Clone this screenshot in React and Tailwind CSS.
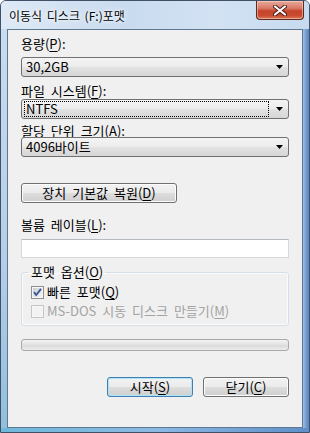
import React from 'react';

const FONT = "font-['Noto_Sans_CJK_KR','Noto_Sans',sans-serif]";

function Key({ children }) {
  return <span className="underline underline-offset-[2px]">{children}</span>;
}

function Arrow() {
  return (
    <svg width="7" height="4" viewBox="0 0 7 4" className="shrink-0">
      <path d="M0 0H7L3.5 4Z" fill="#000" />
    </svg>
  );
}

function Combo({ value, focused, className }) {
  return (
    <div
      className={`${className} h-[20px] flex items-center rounded-[3px] border border-[#707070] bg-[linear-gradient(#f4f4f4_0%,#ececec_48%,#e2e2e2_52%,#d6d6d6_100%)] pl-[2px] pr-[5px]`}
    >
      <div
        className={
          focused
            ? 'flex-1 h-[16px] flex items-center pl-[1px] border border-dotted border-black'
            : 'flex-1 h-[16px] flex items-center pl-[2px]'
        }
      >
        {value}
      </div>
      <div className="w-[14px] flex justify-end">
        <Arrow />
      </div>
    </div>
  );
}

function Button({ children, primary, className }) {
  return (
    <div
      className={`${className} h-[20px] flex items-center justify-center rounded-[3px] border bg-[linear-gradient(#f2f2f2_0%,#ebebeb_48%,#dddddd_52%,#cfcfcf_100%)] ${
        primary ? 'border-[#3c7fb1] shadow-[inset_0_0_0_1px_#aee3f8]' : 'border-[#707070] shadow-[inset_0_0_0_1px_#fcfcfc]'
      }`}
    >
      {children}
    </div>
  );
}

function Check({ checked, disabled }) {
  return (
    <svg width="13" height="13" viewBox="0 0 13 13" className="shrink-0">
      <defs>
        <linearGradient id="cbIn" x1="0" y1="0" x2="1" y2="1">
          <stop offset="0" stopColor="#cbcfd6" />
          <stop offset="1" stopColor="#f4f5f7" />
        </linearGradient>
      </defs>
      <rect x="0.5" y="0.5" width="12" height="12" fill="#f6f6f6" stroke={disabled ? '#c6c6c6' : '#8e8f8f'} />
      <rect x="2" y="2" width="9" height="9" fill={disabled ? '#f2f2f2' : 'url(#cbIn)'} />
      {checked && (
        <path d="M3 6.2 L5.2 9 L10 2.8" stroke="#3d5a95" strokeWidth="1.9" fill="none" />
      )}
    </svg>
  );
}

export default function App() {
  return (
    <div
      className={`${FONT} w-[310px] h-[433px] flex flex-col rounded-t-[6px] border border-[#3f5067] bg-[linear-gradient(180deg,#d6e5f5_0%,#c6daf0_20%,#b6cfea_70%,#9ec2e6_100%)] overflow-hidden text-[13px] leading-[14px] [word-spacing:3px] text-black`}
    >
      <div className="h-[28px] flex items-start justify-between shrink-0 bg-[linear-gradient(90deg,#dde9f6_0%,#c9dbef_40%,#d2e2f3_70%,#c7daef_100%)]">
        <div className="pl-[8px] pt-[8px] [text-shadow:0_0_6px_#fff,0_0_3px_#fff] text-[12px] leading-[14px] [word-spacing:2px]">
          이동식 디스크 (F:)포맷
        </div>
        <div className="mr-[5px] w-[48px] h-[19px] flex items-center justify-center rounded-b-[4px] border border-t-0 border-[#5c2a22] bg-[linear-gradient(#e9a99c_0%,#d77a67_40%,#c7442c_55%,#c94a2f_80%,#db7a55_100%)] shadow-[inset_0_0_0_1px_rgba(255,220,210,0.5)]">
          <svg width="14" height="11" viewBox="0 0 14 11">
            <path d="M2 1.5 L12 9.5 M12 1.5 L2 9.5" stroke="#4a1c14" strokeWidth="4" strokeLinecap="round" />
            <path d="M2 1.5 L12 9.5 M12 1.5 L2 9.5" stroke="#fff" strokeWidth="2.2" strokeLinecap="round" />
          </svg>
        </div>
      </div>

      <div className="flex flex-1">
        <div className="w-[6px] bg-[linear-gradient(180deg,#c9dcf0_0%,#b4cde8_60%,#8fc0dc_100%)]" />
        <div className="flex-1 flex flex-col border border-[#5f7790] bg-[#f0f0f0] pl-[13px] pr-[13px] pt-[8px]">
          <div className="leading-[12px]">
            용량(<Key>P</Key>):
          </div>
          <Combo className="mt-[7px]" value="30,2GB" />

          <div className="mt-[8px] leading-[12px]">
            파일 시스템(<Key>F</Key>):
          </div>
          <Combo className="mt-[2px]" value="NTFS" focused />

          <div className="mt-[6px] leading-[12px]">
            할당 단위 크기(<Key>A</Key>):
          </div>
          <Combo className="mt-0" value="4096바이트" />

          <Button className="mt-[26px] w-[156px]">
            <span>
              장치 기본값 복원(<Key>D</Key>)
            </span>
          </Button>

          <div className="mt-[16px] leading-[12px]">
            볼륨 레이블(<Key>L</Key>):
          </div>
          <div className="mt-[8px] h-[19px] border border-[#d4d9de] border-t-[#b5bac0] bg-white" />

          <fieldset className="mt-[7px] h-[61px] rounded-[3px] border border-[#d5dfe5] shadow-[inset_0_0_0_1px_#fbfbfb] px-[9px]">
            <legend className="ml-[-2px] px-[2px] leading-[14px]">
              포맷 옵션(<Key>O</Key>)
            </legend>
            <div className="mt-[6px] flex items-center gap-[3px] h-[14px]">
              <Check checked />
              <span>
                빠른 포맷(<Key>Q</Key>)
              </span>
            </div>
            <div className="mt-[5px] flex items-center gap-[3px] h-[14px] text-[#a3a3a3]">
              <Check disabled />
              <span>
                MS-DOS 시동 디스크 만들기(<Key>M</Key>)
              </span>
            </div>
          </fieldset>

          <div className="mt-[13px] h-[12px] rounded-[3px] border border-[#a9a9a9] bg-[linear-gradient(#f3f3f3_0%,#e1e1e1_50%,#d9d9d9_51%,#ececec_100%)]" />

          <div className="mt-[26px] flex justify-end gap-[10px]">
            <Button primary className="w-[86px]">
              <span>
                시작(<Key>S</Key>)
              </span>
            </Button>
            <Button className="w-[86px]">
              <span>
                닫기(<Key>C</Key>)
              </span>
            </Button>
          </div>
        </div>
        <div className="w-[6px] bg-[linear-gradient(90deg,#9fbde0_0%,#6f98cb_60%,#5c86bc_100%)]" />
      </div>
      <div className="h-[4px] shrink-0 bg-[linear-gradient(90deg,#6fb8d9_0%,#8db9e3_50%,#5f8fc8_100%)]" />
    </div>
  );
}
